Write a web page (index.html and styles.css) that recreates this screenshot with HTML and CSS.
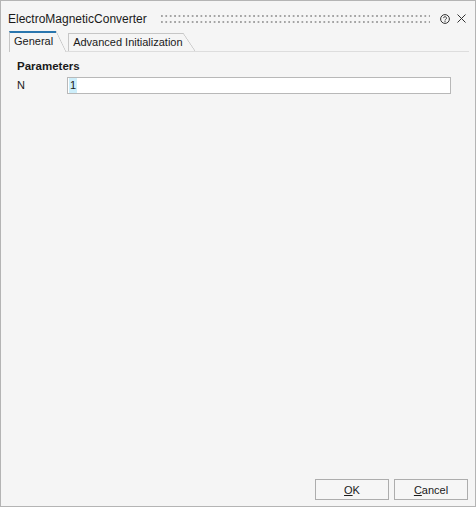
FILE: index.html
```html
<!DOCTYPE html>
<html>
  <head>
    <meta charset="utf-8" />
    <title>ElectroMagneticConverter</title>
    <link rel="stylesheet" href="styles.css">
  </head>
  <body>
    <div class="window">
      <div class="titlebar">
        <span class="title">ElectroMagneticConverter</span>
        <span class="grip"></span>
        <svg class="help" width="10" height="10" viewBox="0 0 10 10">
          <circle cx="5" cy="5" r="4.4" fill="none" stroke="#333" stroke-width="1" />
          <path d="M3.6 4.1 a1.45 1.45 0 1 1 2.1 1.3 c-0.5 0.25 -0.7 0.5 -0.7 1.1" fill="none" stroke="#333" stroke-width="0.9" />
          <circle cx="5" cy="7.6" r="0.55" fill="#333" />
        </svg>
        <svg class="close" width="9" height="9" viewBox="0 0 9 9">
          <path d="M0.5 0.5 L8.5 8.5 M8.5 0.5 L0.5 8.5" stroke="#333" stroke-width="1" />
        </svg>
      </div>

      <div class="tabs">
        <div class="tab tab-active">General</div>
        <div class="tab">Advanced Initialization</div>
      </div>

      <div class="panel">
        <div class="group-title">Parameters</div>
        <div class="field">
          <label class="field-label">N</label>
          <div class="input"><span class="sel">1</span></div>
        </div>
      </div>

      <div class="buttons">
        <button class="btn"><u>O</u>K</button>
        <button class="btn"><u>C</u>ancel</button>
      </div>
    </div>
  </body>
</html>
```

FILE: styles.css
```css
body {
  margin: 0;
  font-family: "Liberation Sans", Arial, sans-serif;
  font-size: 11px;
  color: #1a1a1a;
}

.window {
  width: 476px;
  height: 507px;
  box-sizing: border-box;
  border: 1px solid #b4b4b4;
  background-color: #f5f5f5;
  display: flex;
  flex-direction: column;
}

.titlebar {
  display: flex;
  align-items: center;
  height: 25px;
  padding: 5px 9px 0 7px;
}

.title {
  font-size: 12px;
  color: #1a1a1a;
}

/* two rows of small dots */
.grip {
  flex: 1;
  height: 8px;
  margin: 0 10px 0 14px;
  background-image:
    linear-gradient(to right, #a4a4a4 1.6px, transparent 1.6px),
    linear-gradient(to right, #a4a4a4 1.6px, transparent 1.6px);
  background-size: 4.4px 2px;
  background-position: 0 0, 0 100%;
  background-repeat: repeat-x;
}

.help {
  margin-right: 7px;
}

.tabs {
  display: flex;
  align-items: flex-end;
  height: 20px;
  margin: 0 6px 0 8px;
  border-bottom: 1px solid #dddddd;
}

.tab {
  position: relative;
  height: 18px;
  box-sizing: border-box;
  padding: 2px 12px 0 5px;
  line-height: 15px;
  margin-left: 2px;
  color: #1a1a1a;
}

.tab::before {
  content: "";
  position: absolute;
  top: 0;
  bottom: 0;
  left: 0;
  right: 12px;
  border-left: 1px solid #c6c6c6;
  border-top: 1px solid #c6c6c6;
}

.tab::after {
  content: "";
  position: absolute;
  top: 0;
  bottom: 0;
  right: 0;
  width: 12px;
  background: linear-gradient(to top right, transparent calc(50% - 0.7px), #c6c6c6 50%, transparent calc(50% + 0.7px));
}

.tab-active {
  height: 21px;
  margin-left: 0;
  margin-bottom: -1px;
  padding: 3px 13px 0 5px;
  background-color: #f5f5f5;
}

.tab-active::before {
  right: 10px;
  border-top: 2px solid #2a76ae;
}

.tab-active::after {
  width: 10px;
}

.panel {
  flex: 1;
  padding: 7px 24px 0 16px;
}

.group-title {
  font-weight: bold;
  font-size: 11.5px;
  line-height: 15px;
}

.field {
  display: flex;
  align-items: center;
  margin-top: 3px;
}

.field-label {
  width: 50px;
  line-height: 15px;
}

.input {
  flex: 1;
  height: 17px;
  box-sizing: border-box;
  border: 1px solid #b8b8b8;
  background-color: #ffffff;
  padding: 0 1px;
}

.sel {
  display: inline-block;
  line-height: 15px;
  padding: 0 1px;
  background-color: #cdeefa;
}

.buttons {
  display: flex;
  justify-content: flex-end;
  gap: 5px;
  padding: 0 7px 6px 0;
}

.btn {
  width: 74px;
  height: 21px;
  font-family: "Liberation Sans", Arial, sans-serif;
  font-size: 11px;
  color: #1a1a1a;
  background-color: #f6f6f6;
  border: 1px solid #adadad;
  border-radius: 0;
  padding: 0;
}
```
